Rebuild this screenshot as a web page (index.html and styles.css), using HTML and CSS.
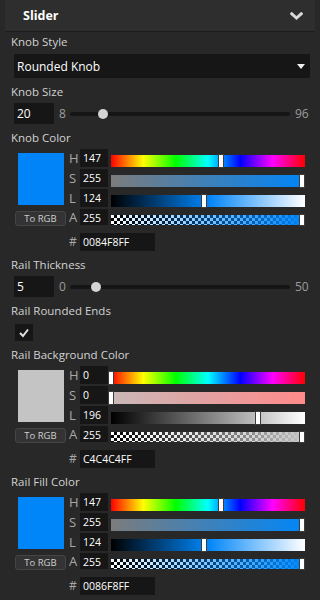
FILE: index.html
```html
<!DOCTYPE html>
<html>
<head>
<meta charset="utf-8">
<link rel="stylesheet" href="styles.css">
</head>
<body>
<div class="header">
  <span class="title">Slider</span>
  <svg class="chev" width="13" height="8" viewBox="0 0 13 8"><polyline points="1.8,1.8 6.5,6 11.2,1.8" fill="none" stroke="#d8d8d8" stroke-width="3" stroke-linecap="square"/></svg>
</div>
<div class="content">
  <div class="field">
    <div class="label">Knob Style</div>
    <div class="select"><span>Rounded Knob</span><span class="tri"></span></div>
  </div>
  <div class="field">
    <div class="label">Knob Size</div>
    <div class="srow">
      <div class="num">20</div>
      <div class="min">8</div>
      <div class="track"><span class="thumb" style="left:33px"></span></div>
      <div class="max">96</div>
    </div>
  </div>
  <div class="field">
    <div class="label">Knob Color</div>
    <div class="cblock">
      <div class="cleft">
        <div class="swatch" style="background:#0084f8"></div>
        <div class="torgb">To RGB</div>
      </div>
      <div class="cright">
        <div class="let">H</div><div class="cin">147</div>
        <div class="bar hue"><span class="handle" style="left:107px"></span></div>
        <div class="let">S</div><div class="cin">255</div>
        <div class="bar" style="background:linear-gradient(to right,#7c7c7c,#0084f8)"><span class="handle" style="left:188px"></span></div>
        <div class="let">L</div><div class="cin">124</div>
        <div class="bar" style="background:linear-gradient(to right,#000,#0084f8 50%,#fff)"><span class="handle" style="left:90px"></span></div>
        <div class="let">A</div><div class="cin">255</div>
        <div class="bar alpha"><span class="fill" style="background:linear-gradient(to right,rgba(0,132,248,0),#0084f8)"></span><span class="handle" style="left:188px"></span></div>
        <div class="let hash">#</div><div class="hex">0084F8FF</div>
      </div>
    </div>
  </div>
  <div class="field">
    <div class="label">Rail Thickness</div>
    <div class="srow">
      <div class="num">5</div>
      <div class="min">0</div>
      <div class="track"><span class="thumb" style="left:26px"></span></div>
      <div class="max">50</div>
    </div>
  </div>
  <div class="field">
    <div class="label">Rail Rounded Ends</div>
    <div class="check"><svg width="18" height="17" viewBox="0 0 18 17"><polyline points="5,9 8,12 13,5.5" fill="none" stroke="#e0e0e0" stroke-width="2"/></svg></div>
  </div>
  <div class="field">
    <div class="label">Rail Background Color</div>
    <div class="cblock">
      <div class="cleft">
        <div class="swatch" style="background:#c4c4c4"></div>
        <div class="torgb">To RGB</div>
      </div>
      <div class="cright">
        <div class="let">H</div><div class="cin">0</div>
        <div class="bar hue"><span class="handle" style="left:-3px"></span></div>
        <div class="let">S</div><div class="cin">0</div>
        <div class="bar" style="background:linear-gradient(to right,#c9b8b8,#ff8a8a)"><span class="handle" style="left:-3px"></span></div>
        <div class="let">L</div><div class="cin">196</div>
        <div class="bar" style="background:linear-gradient(to right,#000,#808080 50%,#fff)"><span class="handle" style="left:144px"></span></div>
        <div class="let">A</div><div class="cin">255</div>
        <div class="bar alpha"><span class="fill" style="background:linear-gradient(to right,rgba(196,196,196,0),#c4c4c4)"></span><span class="handle" style="left:188px"></span></div>
        <div class="let hash">#</div><div class="hex">C4C4C4FF</div>
      </div>
    </div>
  </div>
  <div class="field">
    <div class="label">Rail Fill Color</div>
    <div class="cblock">
      <div class="cleft">
        <div class="swatch" style="background:#0086f8"></div>
        <div class="torgb">To RGB</div>
      </div>
      <div class="cright">
        <div class="let">H</div><div class="cin">147</div>
        <div class="bar hue"><span class="handle" style="left:107px"></span></div>
        <div class="let">S</div><div class="cin">255</div>
        <div class="bar" style="background:linear-gradient(to right,#7c7c7c,#0086f8)"><span class="handle" style="left:188px"></span></div>
        <div class="let">L</div><div class="cin">124</div>
        <div class="bar" style="background:linear-gradient(to right,#000,#0086f8 50%,#fff)"><span class="handle" style="left:90px"></span></div>
        <div class="let">A</div><div class="cin">255</div>
        <div class="bar alpha"><span class="fill" style="background:linear-gradient(to right,rgba(0,134,248,0),#0086f8)"></span><span class="handle" style="left:188px"></span></div>
        <div class="let hash">#</div><div class="hex">0086F8FF</div>
      </div>
    </div>
  </div>
</div>
</body>
</html>
```

FILE: styles.css
```css
* { box-sizing: border-box; }
body {
  margin: 0;
  width: 320px;
  height: 600px;
  overflow: hidden;
  background: #282828;
  font-family: "Open Sans", sans-serif;
  color: #d2d2d2;
}
.header {
  margin: 0 5px;
  height: 32px;
  background: #2e2e2e;
  border-bottom: 1px solid #1c1c1c;
  display: flex;
  align-items: center;
  justify-content: space-between;
  padding: 0 12px 0 18px;
}
.title { font-weight: 700; font-size: 12.5px; color: #fff; }
.chev { display: block; }
.content { padding: 2px 10px 0 11px; }
.field { margin-bottom: 6px; }
.label {
  font-size: 11.5px;
  line-height: 16px;
  height: 16px;
  margin-bottom: 3px;
  color: #d2d2d2;
  white-space: nowrap;
}
.select {
  margin: 4px 0 0 3px;
  height: 24px;
  background: #161616;
  display: flex;
  align-items: center;
  justify-content: space-between;
  padding: 0 5px 0 3px;
  font-size: 12px;
  color: #fff;
}
.tri {
  width: 0; height: 0;
  border-left: 4px solid transparent;
  border-right: 4px solid transparent;
  border-top: 5px solid #f0f0f0;
}
.srow { display: flex; align-items: center; height: 21px; margin-left: 3px; }
.num {
  width: 40px; height: 21px;
  background: #161616;
  color: #fff;
  font-size: 12px;
  line-height: 21px;
  padding-left: 3px;
}
.min { width: 16px; padding-left: 5px; font-size: 12px; color: #9c9c9c; }
.max { width: 20px; padding-left: 5px; font-size: 12px; color: #9c9c9c; white-space: nowrap; }
.track { flex: 1; height: 4px; background: #151515; border-radius: 2px; position: relative; }
.thumb {
  position: absolute; top: 50%;
  width: 10px; height: 10px;
  margin: -5px 0 0 -5px;
  border-radius: 50%;
  background: #d4d4d4;
}
.check {
  margin: 5px 0 0 4px;
  width: 18px; height: 17px;
  background: #161616;
}
.check svg { display: block; }
.cblock { display: flex; }
.cleft { width: 58px; flex: none; }
.swatch { width: 46px; height: 52px; margin: 4px 0 0 7px; }
.torgb {
  width: 51px; height: 15px;
  margin: 6px 0 0 4px;
  background: #333;
  border: 1px solid #454545;
  border-radius: 3px;
  font-size: 9.5px;
  color: #cfcfcf;
  display: flex; align-items: center; justify-content: center;
}
.cright {
  flex: 1;
  display: grid;
  grid-template-columns: 11px 28px 1fr;
  grid-template-rows: 18px 18px 18px 16px 24px;
  row-gap: 2px;
}
.let {
  font-size: 13px;
  color: #a8a8a8;
  line-height: 18px;
  align-self: center;
}
.hash { font-size: 12px; align-self: end; }
.cin {
  background: #161616;
  color: #fff;
  font-size: 10.5px;
  line-height: 18px;
  padding-left: 3px;
}
.hex {
  grid-column: 2 / 4;
  align-self: end;
  width: 75px;
  height: 18px;
  background: #161616;
  color: #fff;
  font-size: 10.5px;
  line-height: 18px;
  padding-left: 3px;
}
.bar {
  position: relative;
  height: 12px;
  margin: 0 5px 0 3px;
  align-self: end;
}
.hue { background: linear-gradient(to right, #f00, #ff0, #0f0, #0ff, #00f, #f0f, #f00); }
.alpha {
  height: 10px;
  background-color: #fff;
  background-image: conic-gradient(#000 25%, #fff 0 50%, #000 0 75%, #fff 0);
  background-size: 6px 6px;
}
.fill { position: absolute; inset: 0; }
.handle {
  position: absolute;
  top: -1px; bottom: -1px;
  width: 6px;
  background: #fff;
  border: 1px solid #3c3c3c;
}
```
